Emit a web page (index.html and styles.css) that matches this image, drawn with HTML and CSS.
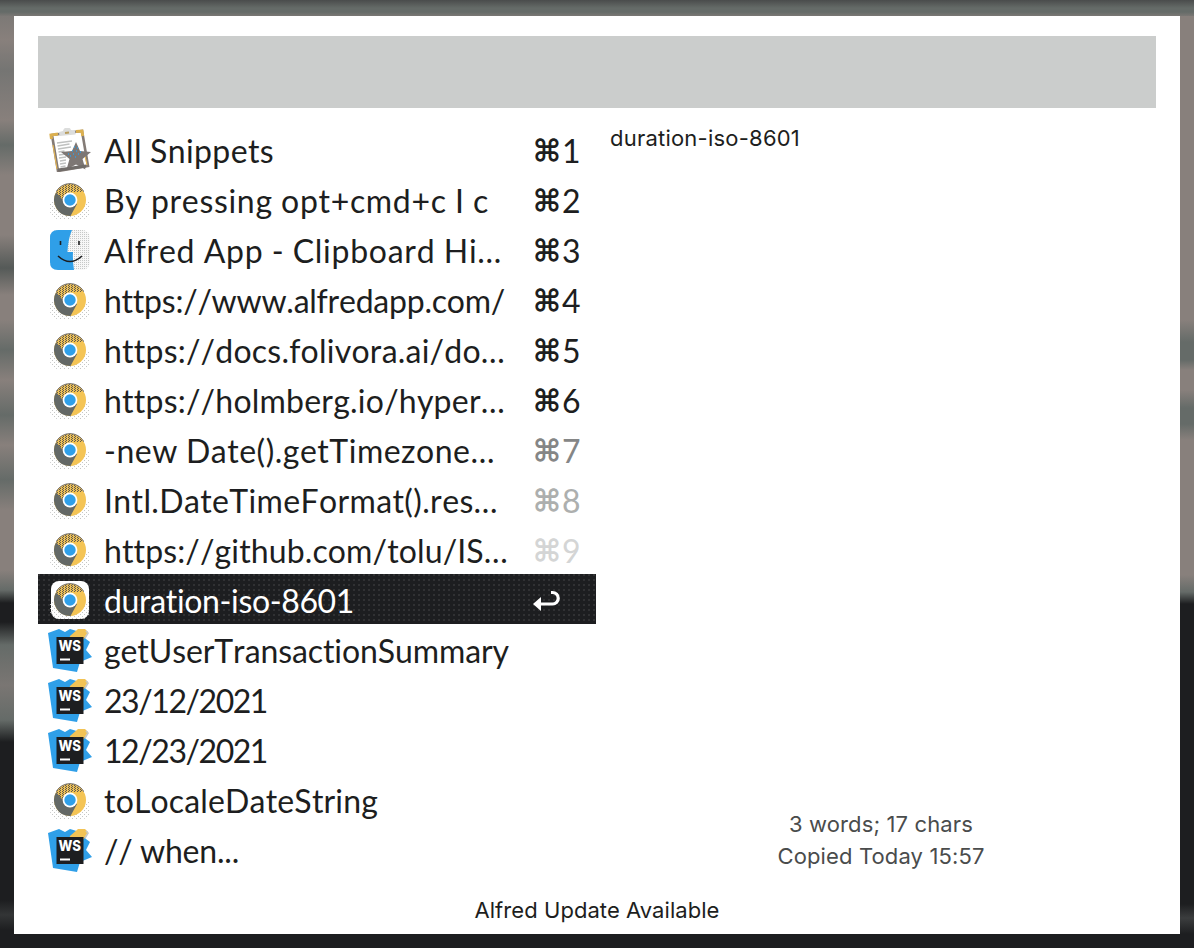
FILE: index.html
```html
<!DOCTYPE html>
<html lang="en">
<head>
<meta charset="utf-8">
<title>Clipboard History</title>
<link rel="stylesheet" href="styles.css">
</head>
<body>
<svg class="defs" aria-hidden="true">
  <defs>
    <pattern id="dots" width="4" height="4" patternUnits="userSpaceOnUse">
      <path d="M0 0h1v1H0zM2 2h1v1H2z" fill="#c4c6c5"/>
    </pattern>
    <pattern id="dense" width="2" height="2" patternUnits="userSpaceOnUse">
      <path d="M0 0h1v1H0z" fill="#c6c8c7"/>
    </pattern>
    <pattern id="weave" width="3" height="2" patternUnits="userSpaceOnUse">
      <path d="M0 0h3v2H0z" fill="#eebf54"/><path d="M0 0h1v1H0zM2 1h1v1H2z" fill="#5c5a50"/>
    </pattern>
    <symbol id="chrome" viewBox="0 0 44 44">
      <rect class="tile" x="3" y="3" width="38" height="38" rx="8"/>
      <path class="tile-dots" d="M2 23h40v10q0 8-8 8H10q-8 0-8-8z" fill="url(#dots)"/>
      <circle cx="22" cy="22" r="16" fill="#f4c455"/>
      <path d="M8.200 14A16 16 0 0 0 22.500 38l6.500-12-7-4z" fill="#646966"/>
      <path d="M8 14A16 16 0 0 1 36 14L22 14l-8 7z" fill="url(#weave)"/>
      <path d="M8.500 13A16 16 0 0 1 35.500 13" fill="none" stroke="#77726b" stroke-width="1"/>
      <circle cx="22" cy="22" r="7.400" fill="#fff"/>
      <circle cx="22" cy="22" r="5.700" fill="#2f9fe8"/>
    </symbol>
    <symbol id="finder" viewBox="0 0 44 44">
      <rect x="2" y="2" width="40" height="40" rx="8" fill="#f7f7f7"/>
      <rect x="2" y="2" width="40" height="40" rx="8" fill="url(#dense)"/>
      <path d="M10 2h14q-4 9-4.500 22H25q-.5 9 1 18H10q-8 0-8-8V10q0-8 8-8z" fill="#2f9fe8"/>
      <path d="M12.500 13v4M31 13v4M10 28q12 11 24 0" fill="none" stroke="#1d1e20" stroke-width="1.600"/>
    </symbol>
    <symbol id="snippets" viewBox="0 0 44 44">
      <path d="M4 7l30-4 6 35-30 5z" fill="#fff" stroke="#847b76" stroke-width="2.600"/>
      <path d="M3.500 11l-.5-4 7-1M28 3.500l6-.5.700 5" fill="none" stroke="#dcb050" stroke-width="3"/>
      <path d="M5 17l4 24M37 28l2 9" stroke="#eebb50" stroke-width="1"/>
      <path d="M11 4l4-1q1-4 4-3 3-1 4 2l4 .5.500 4-16 1.500z" fill="#dcdddc"/>
      <path d="M17 5l4-.5" stroke="#b99d5d" stroke-width="2"/>
      <path d="M9 15l15-2M9.500 18l12-2M10 21l13-2M10.500 24l6-1M11 27l7-1M11 30l7-1M12 33l6-1M12 36l6-1M12.500 39l5-1" stroke="#bfc1c0" stroke-width="1.300"/>
      <path d="M28 14l4 9 11 1-8.500 7 3 10.500-9.500-5-9.500 5 3-10.500-8.500-7 11-1z" fill="#7d7774"/>
      <path d="M26 19h1M29 20h1M24 23h1M28 23h1M32 24h1M20 26h1M25 26h1M30 26h1M22 28h1M27 29h1" stroke="#2f9fe8" stroke-width="1.500"/>
      <path d="M10 42l28-4" stroke="#706c69" stroke-width="3"/>
    </symbol>
    <symbol id="ws" viewBox="0 0 44 44">
      <path d="M0 5l11-4 6 3 5-3 10 3 6 7 4 3-4 8 6 7-12 5-3 10-24-4z" fill="#2f9fe8"/>
      <path d="M22 8l8-7h7l3 3-4 7H21z" fill="#f2c355"/>
      <path d="M38 3l2 2-3 5" fill="none" stroke="#c6c8c7" stroke-width="1.600"/>
      <rect x="8.500" y="9" width="27" height="27" fill="#1d1e20"/>
      <text class="ws-text" x="10.500" y="22.500" textLength="22.500" lengthAdjust="spacingAndGlyphs">WS</text>
      <path d="M12 31.500h10" stroke="#fff" stroke-width="2"/>
    </symbol>
  </defs>
</svg>
<main class="window">
  <div class="search"></div>
  <div class="content">
    <ul class="results">
      <li class="row"><svg class="icon"><use href="#snippets"/></svg><span class="label" data-width="170">All Snippets</span><span class="key"><span class="cmd">⌘</span>1</span></li>
      <li class="row"><svg class="icon"><use href="#chrome"/></svg><span class="label" data-width="385">By pressing opt+cmd+c I c</span><span class="key"><span class="cmd">⌘</span>2</span></li>
      <li class="row"><svg class="icon"><use href="#finder"/></svg><span class="label" data-width="398">Alfred App - Clipboard Hi…</span><span class="key"><span class="cmd">⌘</span>3</span></li>
      <li class="row"><svg class="icon"><use href="#chrome"/></svg><span class="label" data-width="401">https://www.alfredapp.com/</span><span class="key"><span class="cmd">⌘</span>4</span></li>
      <li class="row"><svg class="icon"><use href="#chrome"/></svg><span class="label" data-width="401">https://docs.folivora.ai/do…</span><span class="key"><span class="cmd">⌘</span>5</span></li>
      <li class="row"><svg class="icon"><use href="#chrome"/></svg><span class="label" data-width="401">https://holmberg.io/hyper…</span><span class="key"><span class="cmd">⌘</span>6</span></li>
      <li class="row"><svg class="icon"><use href="#chrome"/></svg><span class="label" data-width="391">-new Date().getTimezone…</span><span class="key fade-1"><span class="cmd">⌘</span>7</span></li>
      <li class="row"><svg class="icon"><use href="#chrome"/></svg><span class="label" data-width="394">Intl.DateTimeFormat().res…</span><span class="key fade-2"><span class="cmd">⌘</span>8</span></li>
      <li class="row"><svg class="icon"><use href="#chrome"/></svg><span class="label" data-width="404">https://github.com/tolu/IS…</span><span class="key fade-3"><span class="cmd">⌘</span>9</span></li>
      <li class="row selected"><svg class="icon"><use href="#chrome"/></svg><span class="label" data-width="250">duration-iso-8601</span><svg class="return" viewBox="0 0 28 22"><path d="M18 2.500h1.500a5.200 5.200 0 0 1 0 11.500H6" fill="none" stroke="#fff" stroke-width="3.200"/><path d="M0 14l8-7v14z" fill="#fff"/></svg></li>
      <li class="row"><svg class="icon"><use href="#ws"/></svg><span class="label" data-width="405">getUserTransactionSummary</span></li>
      <li class="row"><svg class="icon"><use href="#ws"/></svg><span class="label" data-width="163">23/12/2021</span></li>
      <li class="row"><svg class="icon"><use href="#ws"/></svg><span class="label" data-width="163">12/23/2021</span></li>
      <li class="row"><svg class="icon"><use href="#chrome"/></svg><span class="label" data-width="274">toLocaleDateString</span></li>
      <li class="row"><svg class="icon"><use href="#ws"/></svg><span class="label" data-width="135">// when...</span></li>
    </ul>
    <section class="preview">
      <div class="clip"><span data-width="190">duration-iso-8601</span></div>
      <div class="meta"><div><span data-width="184">3 words; 17 chars</span></div><div><span data-width="207">Copied Today 15:57</span></div></div>
    </section>
  </div>
  <footer class="footer"><span data-width="245">Alfred Update Available</span></footer>
</main>
<script src="fit.js"></script>
</body>
</html>
```
FILE: styles.css
```css
* { box-sizing: border-box; }
body {
  margin: 0;
  width: 1194px;
  height: 948px;
  overflow: hidden;
  padding: 16px 14px 14px;
  font-family: Inter, sans-serif;
  color: #1d1e20;
  background:
    linear-gradient(#4a4c4c, #656b68 8px, #656b68 12px, #7a7774 16px) 0 0 / 100% 16px no-repeat,
    linear-gradient(#1d1e20, #1d1e20) 0 100% / 100% 14px no-repeat,
    linear-gradient(#7c7976 16px, #88807c 40px, #757573 70px, #88807c 120px, #656b68 145px, #88807c 175px, #88807c 235px, #555a58 268px, #88807c 295px, #88807c 320px, #656b68 350px, #88807c 380px, #656b68 415px, #88807c 445px, #656b68 480px, #88807c 510px, #88807c 570px, #656b68 590px, #1d1e20 603px, #1d1e20 622px, #656b68 645px, #7a7673 685px, #656b68 720px, #1d1e20 742px, #1d1e20 900px, #333536 915px, #1d1e20 930px) 0 0 / 14px 100% no-repeat,
    linear-gradient(#88807c 16px, #88807c 320px, #656b68 342px, #656b68 360px, #88807c 370px, #88807c 390px, #656b68 408px, #656b68 424px, #88807c 440px, #88807c 575px, #656b68 592px, #1d1e20 604px, #1d1e20 904px, #3b3d3e 918px, #1d1e20 934px) 100% 0 / 14px 100% no-repeat;
}
.defs { position: absolute; width: 0; height: 0; }
.window {
  height: 918px;
  background: #fff;
  padding: 20px 24px 0;
  display: flex;
  flex-direction: column;
}
.search { height: 72px; background: #cbcdcc; flex: none; }
.content { display: flex; margin-top: 16px; height: 750px; }
.results { list-style: none; margin: 0; padding: 0; width: 558px; flex: none; }
.row { height: 50px; display: flex; align-items: center; padding-left: 10px; }
.selected {
  color: #fff;
  background: #1d1e20 radial-gradient(circle at 1px 1px, #464849 .6px, transparent .8px) 0 0 / 5px 5px;
}
.icon { width: 44px; height: 44px; flex: none; margin-top: 2px; }
.ws-text { font: 800 14.5px Inter, sans-serif; fill: #fff; }
.tile { fill: #fff; }
.selected .tile-dots { display: none; }
.label {
  margin-left: 12px;
  width: 429px;
  font: 32px/50px Lato, sans-serif;
  font-kerning: none;
  font-variant-ligatures: none;
  word-spacing: -.5px;
  white-space: nowrap;
  padding-top: 4px;
  flex: none;
}
.key { font: 32px/50px Lato, sans-serif; display: flex; align-items: center; padding-top: 4px; }
.cmd { font: 600 30.5px/50px Inter, sans-serif; width: 28px; margin: -3px 2px 0 -1px; }
.fade-1 { color: #858686; }
.fade-2 { color: #adafae; }
.fade-3 { color: #d4d5d5; }
.return { width: 28px; height: 22px; margin-top: 3px; }
.preview { flex: 1; display: flex; flex-direction: column; justify-content: space-between; padding-left: 14px; font-size: 22px; }
.clip { line-height: 28px; }
.meta { text-align: center; line-height: 32px; color: #4a4c4c; padding: 0 4px 2px 0; }
.clip span, .meta span, .footer span { white-space: nowrap; }
.footer { text-align: center; font-size: 22px; line-height: 28px; margin-top: 22px; }
```
FILE: fit.js
```js
document.querySelectorAll('[data-width]').forEach(function (el) {
  var range = document.createRange();
  range.selectNodeContents(el);
  var natural = range.getBoundingClientRect().width;
  var gap = (Number(el.dataset.width) - natural) / el.textContent.length;
  el.style.letterSpacing = gap.toFixed(3) + 'px';
});
```
